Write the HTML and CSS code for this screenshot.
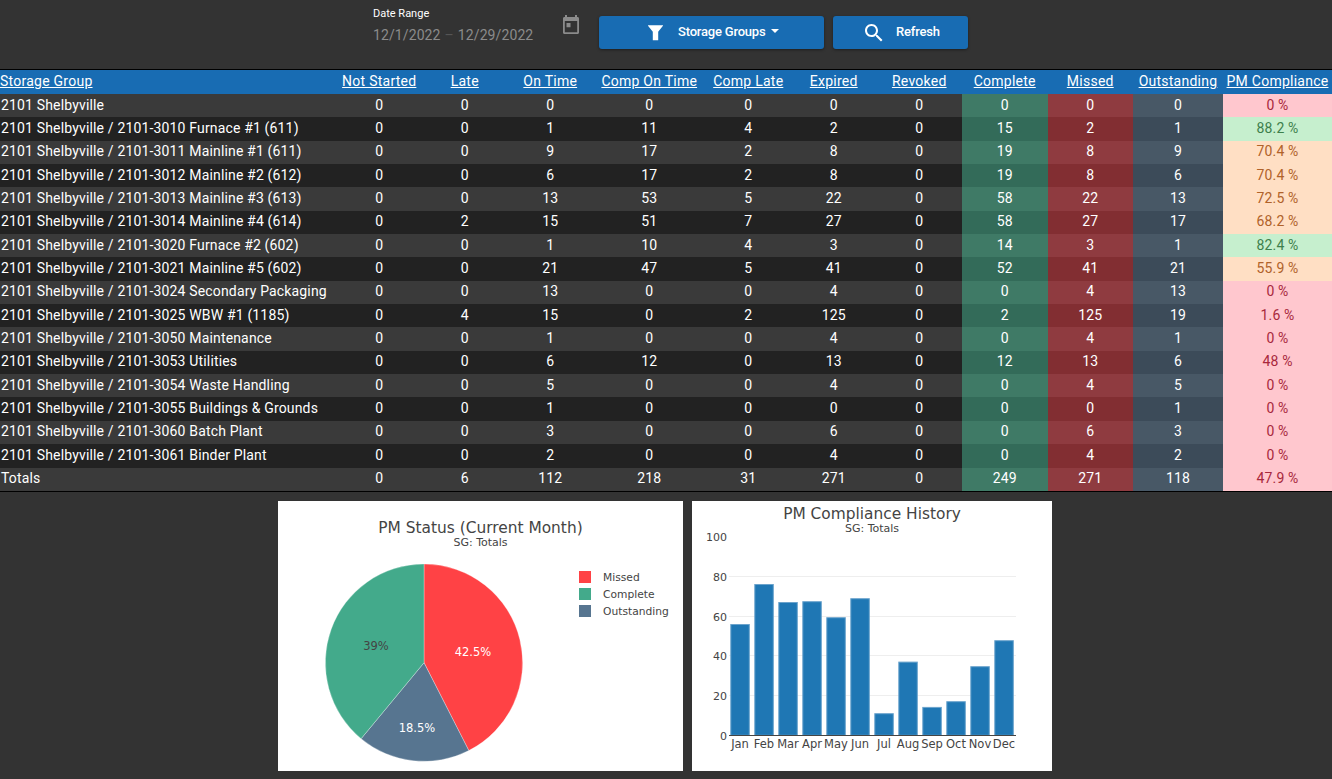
FILE: index.html
```html
<!DOCTYPE html>
<html>
  <head>
    <title>PM Compliance</title>
    <link rel="stylesheet" href="styles.css">
  </head>
  <body>
    <div class="toolbar">
      <div class="date-range">
        <label>Date Range</label>
        <div class="date-values">
          <span>12/1/2022</span>
          <span class="dash">–</span>
          <span>12/29/2022</span>
        </div>
      </div>
      <svg class="cal-icon" width="24" height="24" viewBox="0 0 24 24">
        <path fill-rule="evenodd" d="M6 2h2v2h8V2h2v2h.5C19.400 4 20 4.700 20 5.500v14c0 .8-.6 1.500-1.500 1.500h-13C4.600 21 4 20.300 4 19.500v-14C4 4.700 4.600 4 5.500 4H6zM5.800 8v11.200h12.400V8zM7.500 10h4v4.300h-4z"/>
      </svg>
      <button class="btn btn-groups">
        <svg width="24" height="24" viewBox="0 0 24 24"><path d="M5 4.300h15v.4L15.200 10.800v8.400h-5.400v-8.400L5 4.700z"/></svg>
        <span>Storage Groups</span>
        <i class="caret"></i>
      </button>
      <button class="btn btn-refresh">
        <svg width="24" height="24" viewBox="0 0 24 24"><path d="M15.500 14h-.79l-.28-.27C15.410 12.590 16 11.110 16 9.500 16 5.910 13.090 3 9.500 3S3 5.910 3 9.500 5.910 16 9.500 16c1.610 0 3.090-.59 4.230-1.570l.27.28v.79l5 4.990L20.490 19l-4.990-5zm-6 0C7.010 14 5 11.990 5 9.500S7.010 5 9.500 5 14 7.010 14 9.500 11.990 14 9.500 14z"/></svg>
        <span>Refresh</span>
      </button>
    </div>

    <table class="grid">
      <colgroup>
        <col class="c-name"><col class="c-a"><col class="c-a"><col class="c-a"><col class="c-b"><col class="c-a"><col class="c-a"><col class="c-a"><col class="c-a"><col class="c-a"><col class="c-d"><col>
      </colgroup>
      <thead>
        <tr>
          <th class="left"><a href="#">Storage Group</a></th>
          <th><a href="#">Not Started</a></th>
          <th><a href="#">Late</a></th>
          <th><a href="#">On Time</a></th>
          <th><a href="#">Comp On Time</a></th>
          <th><a href="#">Comp Late</a></th>
          <th><a href="#">Expired</a></th>
          <th><a href="#">Revoked</a></th>
          <th><a href="#">Complete</a></th>
          <th><a href="#">Missed</a></th>
          <th><a href="#">Outstanding</a></th>
          <th><a href="#">PM Compliance</a></th>
        </tr>
      </thead>
      <tbody>
        <tr><td>2101 Shelbyville</td><td>0</td><td>0</td><td>0</td><td>0</td><td>0</td><td>0</td><td>0</td><td class="done">0</td><td class="miss">0</td><td class="out">0</td><td class="bad">0 %</td></tr>
        <tr><td>2101 Shelbyville / 2101-3010 Furnace #1 (611)</td><td>0</td><td>0</td><td>1</td><td>11</td><td>4</td><td>2</td><td>0</td><td class="done">15</td><td class="miss">2</td><td class="out">1</td><td class="good">88.2 %</td></tr>
        <tr><td>2101 Shelbyville / 2101-3011 Mainline #1 (611)</td><td>0</td><td>0</td><td>9</td><td>17</td><td>2</td><td>8</td><td>0</td><td class="done">19</td><td class="miss">8</td><td class="out">9</td><td class="warn">70.4 %</td></tr>
        <tr><td>2101 Shelbyville / 2101-3012 Mainline #2 (612)</td><td>0</td><td>0</td><td>6</td><td>17</td><td>2</td><td>8</td><td>0</td><td class="done">19</td><td class="miss">8</td><td class="out">6</td><td class="warn">70.4 %</td></tr>
        <tr><td>2101 Shelbyville / 2101-3013 Mainline #3 (613)</td><td>0</td><td>0</td><td>13</td><td>53</td><td>5</td><td>22</td><td>0</td><td class="done">58</td><td class="miss">22</td><td class="out">13</td><td class="warn">72.5 %</td></tr>
        <tr><td>2101 Shelbyville / 2101-3014 Mainline #4 (614)</td><td>0</td><td>2</td><td>15</td><td>51</td><td>7</td><td>27</td><td>0</td><td class="done">58</td><td class="miss">27</td><td class="out">17</td><td class="warn">68.2 %</td></tr>
        <tr><td>2101 Shelbyville / 2101-3020 Furnace #2 (602)</td><td>0</td><td>0</td><td>1</td><td>10</td><td>4</td><td>3</td><td>0</td><td class="done">14</td><td class="miss">3</td><td class="out">1</td><td class="good">82.4 %</td></tr>
        <tr><td>2101 Shelbyville / 2101-3021 Mainline #5 (602)</td><td>0</td><td>0</td><td>21</td><td>47</td><td>5</td><td>41</td><td>0</td><td class="done">52</td><td class="miss">41</td><td class="out">21</td><td class="warn">55.9 %</td></tr>
        <tr><td>2101 Shelbyville / 2101-3024 Secondary Packaging</td><td>0</td><td>0</td><td>13</td><td>0</td><td>0</td><td>4</td><td>0</td><td class="done">0</td><td class="miss">4</td><td class="out">13</td><td class="bad">0 %</td></tr>
        <tr><td>2101 Shelbyville / 2101-3025 WBW #1 (1185)</td><td>0</td><td>4</td><td>15</td><td>0</td><td>2</td><td>125</td><td>0</td><td class="done">2</td><td class="miss">125</td><td class="out">19</td><td class="bad">1.6 %</td></tr>
        <tr><td>2101 Shelbyville / 2101-3050 Maintenance</td><td>0</td><td>0</td><td>1</td><td>0</td><td>0</td><td>4</td><td>0</td><td class="done">0</td><td class="miss">4</td><td class="out">1</td><td class="bad">0 %</td></tr>
        <tr><td>2101 Shelbyville / 2101-3053 Utilities</td><td>0</td><td>0</td><td>6</td><td>12</td><td>0</td><td>13</td><td>0</td><td class="done">12</td><td class="miss">13</td><td class="out">6</td><td class="bad">48 %</td></tr>
        <tr><td>2101 Shelbyville / 2101-3054 Waste Handling</td><td>0</td><td>0</td><td>5</td><td>0</td><td>0</td><td>4</td><td>0</td><td class="done">0</td><td class="miss">4</td><td class="out">5</td><td class="bad">0 %</td></tr>
        <tr><td>2101 Shelbyville / 2101-3055 Buildings &amp; Grounds</td><td>0</td><td>0</td><td>1</td><td>0</td><td>0</td><td>0</td><td>0</td><td class="done">0</td><td class="miss">0</td><td class="out">1</td><td class="bad">0 %</td></tr>
        <tr><td>2101 Shelbyville / 2101-3060 Batch Plant</td><td>0</td><td>0</td><td>3</td><td>0</td><td>0</td><td>6</td><td>0</td><td class="done">0</td><td class="miss">6</td><td class="out">3</td><td class="bad">0 %</td></tr>
        <tr><td>2101 Shelbyville / 2101-3061 Binder Plant</td><td>0</td><td>0</td><td>2</td><td>0</td><td>0</td><td>4</td><td>0</td><td class="done">0</td><td class="miss">4</td><td class="out">2</td><td class="bad">0 %</td></tr>
        <tr><td>Totals</td><td>0</td><td>6</td><td>112</td><td>218</td><td>31</td><td>271</td><td>0</td><td class="done">249</td><td class="miss">271</td><td class="out">118</td><td class="bad">47.9 %</td></tr>
      </tbody>
    </table>

    <div class="charts">
      <div class="chart chart-pie">
        <svg width="405" height="270" viewBox="0 0 405 270">
          <text class="title" x="202.500" y="32" text-anchor="middle">PM Status (Current Month)</text>
          <text class="sub" x="202.500" y="45" text-anchor="middle">SG: Totals</text>
          <path fill="#ff4245" stroke="#fff" stroke-width="0.3" d="M146 161.700V63A98.700 98.700 0 0 1 190.800 249.600Z"/>
          <path fill="#577590" stroke="#fff" stroke-width="0.3" d="M146 161.700L190.800 249.600A98.700 98.700 0 0 1 83.100 237.700Z"/>
          <path fill="#43aa8b" stroke="#fff" stroke-width="0.3" d="M146 161.700L83.100 237.700A98.700 98.700 0 0 1 146 63Z"/>
          <text class="pie-label light" x="195" y="155" text-anchor="middle">42.5%</text>
          <text class="pie-label light" x="139" y="231" text-anchor="middle">18.5%</text>
          <text class="pie-label" x="98" y="149" text-anchor="middle">39%</text>
          <rect x="301" y="70" width="12" height="12" fill="#ff4245"/>
          <text class="legend" x="325" y="80">Missed</text>
          <rect x="301" y="87" width="12" height="12" fill="#43aa8b"/>
          <text class="legend" x="325" y="97">Complete</text>
          <rect x="301" y="104" width="12" height="12" fill="#577590"/>
          <text class="legend" x="325" y="114">Outstanding</text>
        </svg>
      </div>
      <div class="chart chart-bar">
        <svg width="360" height="270" viewBox="0 0 360 270">
          <text class="title" x="180" y="18" text-anchor="middle">PM Compliance History</text>
          <text class="sub" x="180" y="31" text-anchor="middle">SG: Totals</text>
          <g class="gridlines">
            <line x1="37" x2="324" y1="75.500" y2="75.500"/>
            <line x1="37" x2="324" y1="115.500" y2="115.500"/>
            <line x1="37" x2="324" y1="154.500" y2="154.500"/>
            <line x1="37" x2="324" y1="194.500" y2="194.500"/>
          </g>
          <g class="bars">
            <rect x="38.800" y="123.500" width="18.500" height="110.800"/>
            <rect x="62.800" y="83.500" width="18.500" height="150.800"/>
            <rect x="86.800" y="101.500" width="18.500" height="132.800"/>
            <rect x="110.800" y="100.700" width="18.500" height="133.600"/>
            <rect x="134.800" y="116.700" width="18.500" height="117.600"/>
            <rect x="158.800" y="97.700" width="18.500" height="136.600"/>
            <rect x="182.800" y="212.700" width="18.500" height="21.600"/>
            <rect x="206.800" y="161.100" width="18.500" height="73.200"/>
            <rect x="230.800" y="206.400" width="18.500" height="27.900"/>
            <rect x="254.800" y="200.700" width="18.500" height="33.600"/>
            <rect x="278.800" y="165.700" width="18.500" height="68.600"/>
            <rect x="302.800" y="139.700" width="18.500" height="94.600"/>
          </g>
          <line class="axis" x1="37" x2="324" y1="234.500" y2="234.500"/>
          <g class="y-labels">
            <text x="35" y="40">100</text>
            <text x="35" y="80">80</text>
            <text x="35" y="120">60</text>
            <text x="35" y="159">40</text>
            <text x="35" y="199">20</text>
            <text x="35" y="239">0</text>
          </g>
          <g class="x-labels">
            <text x="48" y="247">Jan</text>
            <text x="72" y="247">Feb</text>
            <text x="96" y="247">Mar</text>
            <text x="120" y="247">Apr</text>
            <text x="144" y="247">May</text>
            <text x="168" y="247">Jun</text>
            <text x="192" y="247">Jul</text>
            <text x="216" y="247">Aug</text>
            <text x="240" y="247">Sep</text>
            <text x="264" y="247">Oct</text>
            <text x="288" y="247">Nov</text>
            <text x="312" y="247">Dec</text>
          </g>
        </svg>
      </div>
    </div>
  </body>
</html>
```
FILE: styles.css
```css
body {
  font-family: Roboto, sans-serif;
  background: #333;
  color: white;
  margin: 0;
  overflow: hidden;
}
.toolbar {
  display: flex;
  align-items: flex-start;
  height: 69px;
  padding-left: 373px;
  box-sizing: border-box;
}
.date-range {
  width: 178px;
  padding-top: 8px;
}
.date-range label {
  display: block;
  font-size: 11px;
  line-height: 12px;
  margin-bottom: 4px;
}
.date-values {
  display: flex;
  gap: 4px;
  font-size: 14px;
  letter-spacing: 0.1px;
  line-height: 22px;
  color: #8b8b8b;
}
.dash {
  color: #555;
}
.cal-icon {
  fill: #8b8b8b;
  margin: 13px 0 0 8px;
}
.btn {
  display: flex;
  align-items: center;
  height: 33px;
  margin-top: 16px;
  border: none;
  border-radius: 3px;
  background: #186cb3;
  color: white;
  font-family: Roboto, sans-serif;
  font-size: 13px;
  font-weight: 500;
  box-shadow: 0 1px 3px rgba(0, 0, 0, 0.4);
  padding: 0;
}
.btn svg {
  fill: white;
}
.btn span {
  margin-bottom: 2px;
  letter-spacing: -0.2px;
}
.btn-groups {
  width: 225px;
  margin-left: 16px;
  padding-left: 44px;
}
.btn-groups span {
  margin-left: 11px;
}
.btn-refresh {
  width: 135px;
  margin-left: 9px;
  padding-left: 29px;
}
.btn-refresh span {
  margin-left: 10px;
}
.caret {
  width: 0;
  height: 0;
  margin-left: 6px;
  margin-bottom: 3px;
  border-left: 4px solid transparent;
  border-right: 4px solid transparent;
  border-top: 4px solid white;
}
.grid {
  width: 1332px;
  table-layout: fixed;
  border-collapse: collapse;
  border-top: 1px solid #000;
  border-bottom: 1px solid #000;
  font-size: 14px;
}
.c-name {
  width: 336.500px;
}
.c-a {
  width: 85.500px;
}
.c-b {
  width: 112.500px;
}
.c-d {
  width: 90px;
}
.grid th {
  background: #186cb3;
  height: 22px;
  padding: 0 0 2px;
  font-weight: 400;
  letter-spacing: 0.25px;
}
.grid th.left {
  text-align: left;
}
.grid th a {
  color: white;
}
.grid td {
  height: 21.350px;
  padding: 0 0 2px;
  text-align: center;
  letter-spacing: 0.16px;
}
.grid td:first-child {
  text-align: left;
  padding-left: 1px;
}
.grid tbody tr:nth-child(odd) {
  background: #3a3a3a;
}
.grid tbody tr:nth-child(even) {
  background: #222;
}
.grid tbody tr:nth-child(odd) .done {
  background: #3f7a66;
}
.grid tbody tr:nth-child(even) .done {
  background: #336b59;
}
.grid tbody tr:nth-child(odd) .miss {
  background: #8f3b40;
}
.grid tbody tr:nth-child(even) .miss {
  background: #822e32;
}
.grid tbody tr:nth-child(odd) .out {
  background: #485866;
}
.grid tbody tr:nth-child(even) .out {
  background: #3c4b59;
}
.grid td.bad {
  background: #ffc7ce;
  color: #a8283c;
}
.grid td.good {
  background: #c6efce;
  color: #3e7f4c;
}
.grid td.warn {
  background: #ffdfc4;
  color: #b0622a;
}
.charts {
  display: flex;
  gap: 9px;
  padding: 9px 0 0 278px;
}
.chart {
  background: white;
  height: 270px;
}
.chart svg {
  display: block;
  font-family: "DejaVu Sans", Verdana, sans-serif;
}
.title {
  font-size: 15.400px;
  fill: #444;
}
.sub {
  font-size: 11px;
  fill: #444;
}
.legend {
  font-size: 10.700px;
  fill: #444;
}
.pie-label {
  font-size: 11.500px;
  fill: #444;
}
.pie-label.light {
  fill: white;
}
.gridlines line {
  stroke: #eee;
  stroke-width: 1;
}
.bars rect {
  fill: #1f77b4;
  stroke: #6ba3cc;
  stroke-width: 1;
}
.axis {
  stroke: #444;
  stroke-width: 1;
}
.y-labels text {
  font-size: 11px;
  fill: #444;
  text-anchor: end;
}
.x-labels text {
  font-size: 11.500px;
  fill: #444;
  text-anchor: middle;
}
```
